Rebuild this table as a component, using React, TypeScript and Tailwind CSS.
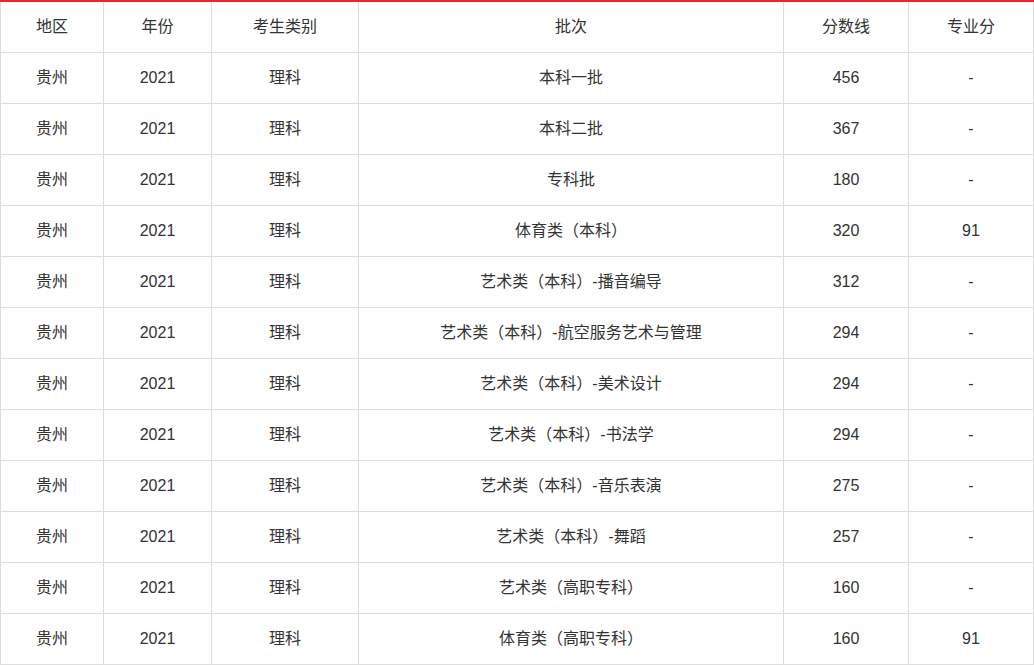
const columns = [
  { label: "地区", width: "w-[104px] border-l" },
  { label: "年份", width: "w-[108px]" },
  { label: "考生类别", width: "w-[147px]" },
  { label: "批次", width: "w-[425px]" },
  { label: "分数线", width: "w-[125px]" },
  { label: "专业分", width: "w-[125px]" },
];

const rows: [string, string, string, string, string, string][] = [
  ["贵州", "2021", "理科", "本科一批", "456", "-"],
  ["贵州", "2021", "理科", "本科二批", "367", "-"],
  ["贵州", "2021", "理科", "专科批", "180", "-"],
  ["贵州", "2021", "理科", "体育类（本科）", "320", "91"],
  ["贵州", "2021", "理科", "艺术类（本科）-播音编导", "312", "-"],
  ["贵州", "2021", "理科", "艺术类（本科）-航空服务艺术与管理", "294", "-"],
  ["贵州", "2021", "理科", "艺术类（本科）-美术设计", "294", "-"],
  ["贵州", "2021", "理科", "艺术类（本科）-书法学", "294", "-"],
  ["贵州", "2021", "理科", "艺术类（本科）-音乐表演", "275", "-"],
  ["贵州", "2021", "理科", "艺术类（本科）-舞蹈", "257", "-"],
  ["贵州", "2021", "理科", "艺术类（高职专科）", "160", "-"],
  ["贵州", "2021", "理科", "体育类（高职专科）", "160", "91"],
];

function Row({ cells }: { cells: string[] }) {
  return (
    <div className="flex h-[51px] border-b border-[#dddddd]">
      {cells.map((c, i) => (
        <div
          key={i}
          className={`${columns[i].width} flex shrink-0 items-center justify-center border-r border-[#dddddd]`}
        >
          {c}
        </div>
      ))}
    </div>
  );
}

export default function App() {
  return (
    <div
      className="w-[1034px] bg-white text-[16px] text-[#333333] border-t-2 border-[#e8262e]"
      style={{ fontFamily: '"Liberation Sans", "Noto Sans CJK SC", sans-serif' }}
    >
      <Row cells={columns.map((c) => c.label)} />
      {rows.map((r, i) => (
        <Row key={i} cells={r} />
      ))}
    </div>
  );
}
